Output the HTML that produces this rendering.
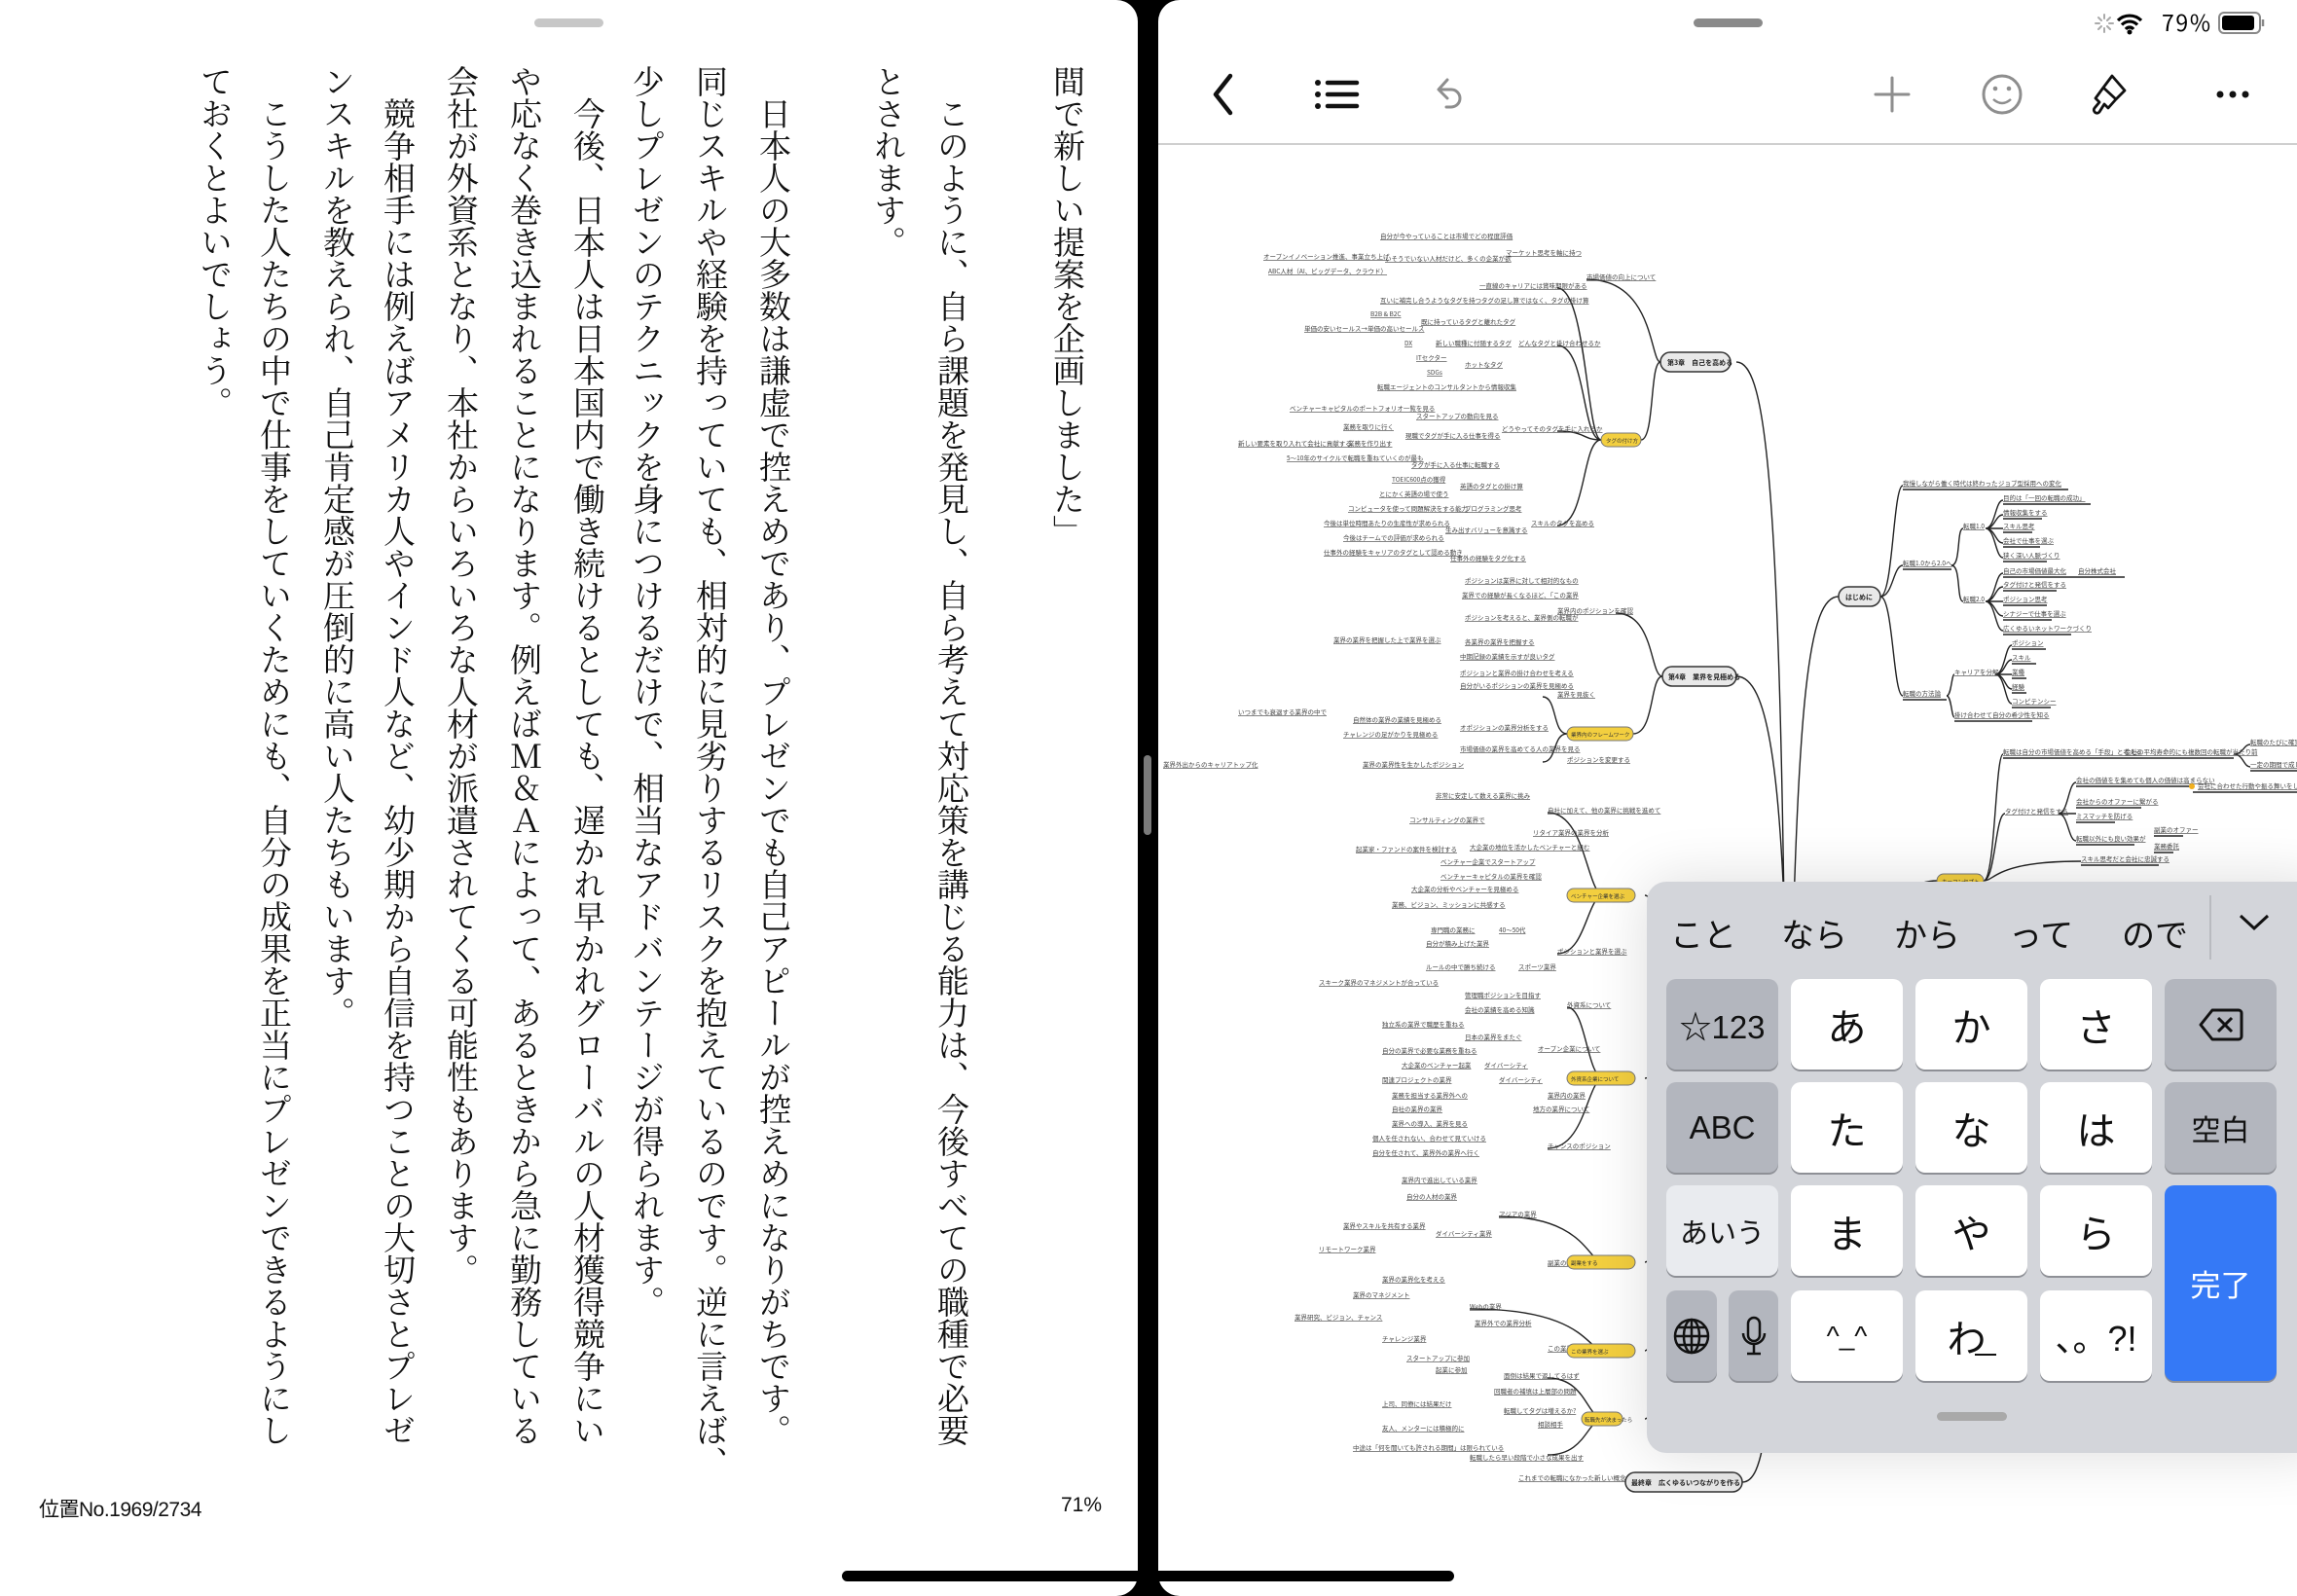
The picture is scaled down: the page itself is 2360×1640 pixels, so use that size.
<!DOCTYPE html>
<html lang="ja"><head><meta charset="utf-8">
<style>
*{margin:0;padding:0;box-sizing:border-box}
html,body{width:2360px;height:1640px;overflow:hidden;background:#000}
body{position:relative;font-family:"Liberation Sans","Noto Sans CJK JP",sans-serif}
.pane{position:absolute;top:0;height:1640px;background:#fff;overflow:hidden}
#lp{left:0;width:1169px;border-radius:0 22px 22px 0}
#rp{left:1190px;width:1170px;border-radius:22px 0 0 22px}
.col{position:absolute;top:67px;writing-mode:vertical-rl;font-family:"Liberation Serif","Noto Serif CJK SC","Noto Serif CJK JP",serif;font-size:33px;line-height:33px;color:#111;white-space:nowrap}
.ab{position:absolute}
.key{position:absolute;width:115px;height:93px;border-radius:10px;background:#fff;box-shadow:0 2px 0 #8e9096;display:flex;align-items:center;justify-content:center;font-family:"Liberation Sans","Noto Sans CJK JP",sans-serif;color:#111;font-size:40px}
.g{background:#b3b6be}
.sg{position:absolute;top:934px;font-size:34px;color:#111;font-family:"Noto Sans CJK JP",sans-serif}
svg text{font-family:"Noto Sans CJK JP",sans-serif}
.l{font-size:6.5px;fill:#444;text-decoration:underline;text-decoration-color:#333}
.n{font-size:7px;font-weight:bold;fill:#222}
</style></head><body>

<div class="pane" id="lp">
  <div class="ab" style="left:549px;top:19px;width:71px;height:9px;border-radius:5px;background:#c7c7c7"></div>
  <div class="col" style="left:1078px">間で新しい提案を企画しました」</div>
  <div class="col" style="left:959px">　このように、自ら課題を発見し、自ら考えて対応策を講じる能力は、今後すべての職種で必要</div>
  <div class="col" style="left:894px">とされます。</div>
  <div class="col" style="left:776px">　日本人の大多数は謙虚で控えめであり、プレゼンでも自己アピールが控えめになりがちです。</div>
  <div class="col" style="left:711px">同じスキルや経験を持っていても、相対的に見劣りするリスクを抱えているのです。逆に言えば、</div>
  <div class="col" style="left:646px">少しプレゼンのテクニックを身につけるだけで、相当なアドバンテージが得られます。</div>
  <div class="col" style="left:585px">　今後、日本人は日本国内で働き続けるとしても、遅かれ早かれグローバルの人材獲得競争にい</div>
  <div class="col" style="left:520px">や応なく巻き込まれることになります。例えばＭ＆Ａによって、あるときから急に勤務している</div>
  <div class="col" style="left:455px">会社が外資系となり、本社からいろいろな人材が派遣されてくる可能性もあります。</div>
  <div class="col" style="left:390px">　競争相手には例えばアメリカ人やインド人など、幼少期から自信を持つことの大切さとプレゼ</div>
  <div class="col" style="left:328px">ンスキルを教えられ、自己肯定感が圧倒的に高い人たちもいます。</div>
  <div class="col" style="left:263px">　こうした人たちの中で仕事をしていくためにも、自分の成果を正当にプレゼンできるようにし</div>
  <div class="col" style="left:202px">ておくとよいでしょう。</div>
  <div class="ab" style="left:40px;top:1535px;font-size:21px;color:#111;letter-spacing:-0.5px">位置No.1969/2734</div>
  <div class="ab" style="left:1090px;top:1535px;font-size:21px;color:#111">71%</div>
</div>

<div class="pane" id="rp">
  <div class="ab" style="left:550px;top:19px;width:71px;height:9px;border-radius:5px;background:#8a8a8a"></div>
  <div class="ab" style="left:0;top:147px;width:1170px;height:2px;background:#cfcfcf"></div>
</div>

<!-- status + toolbar -->
<svg class="ab" style="left:0;top:0" width="2360" height="150">
  <g stroke="#aaa" stroke-width="2" stroke-linecap="round">
    <path d="M2162 15v4M2162 29v4M2153 24h4M2167 24h4M2156 18l3 3M2165 27l3 3M2156 30l3-3M2165 21l3-3"/>
  </g>
  <path d="M2176 21a17 17 0 0 1 24 0M2180 25.5a11 11 0 0 1 16 0M2184 30a5 5 0 0 1 8 0" fill="none" stroke="#000" stroke-width="3.2"/>
  <circle cx="2188" cy="33" r="2.5"/>
  <text x="2221" y="32" font-size="23" font-family="Liberation Sans" fill="#000" textLength="50">79%</text>
  <rect x="2280" y="13" width="42" height="21" rx="5" fill="none" stroke="#888" stroke-width="2"/>
  <rect x="2283" y="16" width="33" height="15" rx="3" fill="#000"/>
  <path d="M2325 20v7" stroke="#888" stroke-width="2.5"/>
  <path d="M1264 78L1249 97L1264 116" fill="none" stroke="#111" stroke-width="4.5" stroke-linecap="round" stroke-linejoin="round"/>
  <g fill="#111"><circle cx="1354" cy="85" r="3"/><circle cx="1354" cy="97" r="3"/><circle cx="1354" cy="109" r="3"/></g>
  <path d="M1364 85h30M1364 97h30M1364 109h30" stroke="#111" stroke-width="4.5" stroke-linecap="round"/>
  <path d="M1487 82l-9 10 9 9M1479 92h12a9 9 0 0 1 0 18h-5" fill="none" stroke="#8e8e8e" stroke-width="3" stroke-linecap="round" stroke-linejoin="round"/>
  <path d="M1944 80v34M1927 97h34" stroke="#8e8e8e" stroke-width="3" stroke-linecap="round"/>
  <circle cx="2057" cy="97" r="19" fill="none" stroke="#8e8e8e" stroke-width="3"/>
  <circle cx="2050" cy="91" r="2.3" fill="#8e8e8e"/><circle cx="2064" cy="91" r="2.3" fill="#8e8e8e"/>
  <path d="M2048 102q9 8 18 0" fill="none" stroke="#8e8e8e" stroke-width="2.5"/>
  <path d="M2170 78l13 15-9 9-13-12zM2161 90l13 12-8 9-4-4-5 8a3 3 0 0 1-5-4l5-6-4-4z" fill="none" stroke="#111" stroke-width="2.8" stroke-linejoin="round"/>
  <g fill="#111"><circle cx="2281" cy="97" r="3.5"/><circle cx="2294" cy="97" r="3.5"/><circle cx="2307" cy="97" r="3.5"/></g>
</svg>

<!-- mindmap -->
<svg class="ab" style="left:0;top:0" width="2360" height="1640">
<defs><clipPath id="c"><rect x="1190" y="150" width="1170" height="1480"/></clipPath></defs>
<g clip-path="url(#c)">
<g fill="none" stroke="#222" stroke-width="1.4">
  <path d="M1835 1120C1830 500 1815 372 1784 372"/>
  <path d="M1837 1120C1835 780 1815 695 1784 695"/>
  <path d="M1839 1120C1845 700 1860 613 1889 613"/>
  <path d="M1841 1120C1850 950 1960 905 1990 905"/>
  <path d="M1826 1120C1826 1480 1810 1523 1790 1523"/>
  <path d="M1706 372C1695 372 1700 287 1630 287"/>
  <path d="M1706 372C1695 372 1700 452 1686 452"/>
  <path d="M1645 452C1630 452 1630 296 1600 296"/>
  <path d="M1645 452C1625 452 1630 355 1600 355"/>
  <path d="M1645 452C1625 452 1630 443 1600 443"/>
  <path d="M1645 452C1625 452 1630 540 1600 540"/>
  <path d="M1708 695C1695 695 1700 630 1660 630"/>
  <path d="M1708 695C1695 695 1700 754 1678 754"/>
  <path d="M1610 754C1595 754 1600 716 1585 716"/>
  <path d="M1610 754C1595 754 1600 783 1585 783"/>
  <path d="M1690 920C1705 920 1700 1000 1720 1100"/>
  <path d="M1690 1108C1705 1108 1700 1050 1720 1000"/>
  <path d="M1690 1297C1710 1297 1705 1100 1720 1000"/>
  <path d="M1690 1388C1710 1388 1705 1100 1722 1000"/>
  <path d="M1690 1458C1712 1458 1708 1150 1724 1000"/>
  <path d="M1648 920C1630 920 1630 835 1590 835"/>
  <path d="M1648 920C1630 920 1630 980 1600 980"/>
  <path d="M1648 1108C1630 1108 1630 1035 1610 1035"/>
  <path d="M1648 1108C1630 1108 1630 1180 1590 1180"/>
  <path d="M1648 1297C1630 1297 1630 1250 1540 1250"/>
  <path d="M1648 1388C1630 1388 1630 1345 1510 1345"/>
  <path d="M1648 1458C1630 1458 1630 1416 1590 1416"/>
  <path d="M1648 1458C1630 1458 1630 1495 1590 1495"/>
  <path d="M1932 613C1945 613 1945 499 1955 499"/>
  <path d="M1932 613C1945 613 1945 581 1955 581"/>
  <path d="M1932 613C1945 613 1945 715 1955 715"/>
  <path d="M2005 581C2015 581 2010 543 2017 543"/>
  <path d="M2005 581C2015 581 2010 618 2017 618"/>
  <path d="M2040 543C2050 543 2050 514 2058 514M2040 543C2050 543 2050 573 2058 573M2040 543h18M2040 543C2050 543 2050 529 2058 529M2040 543C2050 543 2050 558 2058 558"/>
  <path d="M2040 618C2050 618 2050 589 2058 589M2040 618C2050 618 2050 648 2058 648M2040 618h18M2040 618C2050 618 2050 603 2058 603M2040 618C2050 618 2050 633 2058 633"/>
  <path d="M2000 715C2005 715 2005 693 2008 693M2000 715C2005 715 2005 737 2008 737"/>
  <path d="M2050 693C2060 693 2060 663 2067 663M2050 693C2060 693 2060 723 2067 723M2050 693h17M2050 693C2060 693 2060 678 2067 678M2050 693C2060 693 2060 708 2067 708"/>
  <path d="M2038 905C2050 905 2050 775 2058 775M2038 905C2050 905 2050 836 2060 836M2038 905C2050 905 2050 885 2138 885"/>
  <path d="M2115 836C2125 836 2125 804 2133 804M2115 836h18M2115 836C2125 836 2125 864 2133 864"/>
  <path d="M2295 775C2305 775 2305 765 2312 765M2295 775C2305 775 2305 788 2312 788"/>
</g>
<g stroke="#222" stroke-width="1.4">
  <path d="M1955 503h95M2050 503h75M2058 518h90M2058 533h40M2058 547h30M2058 562h38M2058 577h45M1955 585h50M2058 593h75M2133 593h50M2058 607h55M2058 622h45M2058 637h50M2058 652h70M2067 667h35M2067 682h25M2067 697h15M2067 712h15M2067 727h40M1955 719h45M2008 741h80M2058 779h125M2183 779h112M2312 792h50M2133 808h120M2253 814h107M2133 830h67M2133 845h40M2133 868h60M2213 859h30M2213 876h20M2138 889h80"/>
</g>
<g>
<text class="l" x="1418" y="245">自分が今やっていることは市場でどの程度評価</text>
<text class="l" x="1547" y="262">マーケット思考を軸に持つ</text>
<text class="l" x="1298" y="266">オープンイノベーション推進、事業立ち上げ</text>
<text class="l" x="1423" y="268">いそうでいない人材だけど、多くの企業が欲</text>
<text class="l" x="1303" y="281">ABC人材（AI、ビッグデータ、クラウド）</text>
<text class="l" x="1630" y="287">市場価値の向上について</text>
<text class="l" x="1520" y="296">一直線のキャリアには賞味期限がある</text>
<text class="l" x="1418" y="311">互いに補完し合うようなタグを持つ</text>
<text class="l" x="1522" y="311">タグの足し算ではなく、タグの掛け算</text>
<text class="l" x="1408" y="325">B2B &amp; B2C</text>
<text class="l" x="1460" y="333">既に持っているタグと離れたタグ</text>
<text class="l" x="1340" y="340">単価の安いセールス→単価の高いセールス</text>
<text class="l" x="1443" y="355">DX</text><text class="l" x="1475" y="355">新しい職種に付随するタグ</text>
<text class="l" x="1560" y="355">どんなタグと掛け合わせるか</text>
<text class="l" x="1455" y="370">ITセクター</text><text class="l" x="1505" y="377">ホットなタグ</text><text class="l" x="1466" y="385">SDGs</text>
<text class="l" x="1415" y="400">転職エージェントのコンサルタントから情報収集</text>
<text class="l" x="1325" y="422">ベンチャーキャピタルのポートフォリオ一覧を見る</text>
<text class="l" x="1455" y="430">スタートアップの動向を見る</text>
<text class="l" x="1380" y="441">業務を取りに行く</text><text class="l" x="1543" y="443">どうやってそのタグを手に入れるか</text>
<text class="l" x="1444" y="450">現職でタグが手に入る仕事を得る</text>
<text class="l" x="1272" y="458">新しい要素を取り入れて会社に貢献する</text><text class="l" x="1385" y="458">業務を作り出す</text>
<text class="l" x="1322" y="473">5〜10年のサイクルで転職を重ねていくのが最も</text>
<text class="l" x="1450" y="480">タグが手に入る仕事に転職する</text>
<text class="l" x="1430" y="495">TOEIC600点の獲得</text><text class="l" x="1500" y="502">英語のタグとの掛け算</text>
<text class="l" x="1417" y="510">とにかく英語の場で使う</text>
<text class="l" x="1385" y="525">コンピュータを使って問題解決をする能力</text><text class="l" x="1505" y="525">プログラミング思考</text>
<text class="l" x="1360" y="540">今後は単位時間あたりの生産性が求められる</text><text class="l" x="1573" y="540">スキルのタグを高める</text>
<text class="l" x="1485" y="547">生み出すバリューを意識する</text>
<text class="l" x="1380" y="555">今後はチームでの評価が求められる</text>
<text class="l" x="1360" y="570">仕事外の経験をキャリアのタグとして認める動き</text><text class="l" x="1490" y="576">仕事外の経験をタグ化する</text>
<text class="l" x="1505" y="599">ポジションは業界に対して相対的なもの</text>
<text class="l" x="1502" y="614">業界での経験が長くなるほど、「この業界</text>
<text class="l" x="1600" y="630">業界内のポジションを確認</text>
<text class="l" x="1505" y="637">ポジションを考えると、業界側の転職が</text>
<text class="l" x="1370" y="660">業界の業界を把握した上で業界を選ぶ</text><text class="l" x="1505" y="662">各業界の業界を把握する</text>
<text class="l" x="1500" y="677">中期記録の業績を示すが良いタグ</text>
<text class="l" x="1500" y="694">ポジションと業界の掛け合わせを考える</text>
<text class="l" x="1500" y="707">自分がいるポジションの業界を見極める</text><text class="l" x="1600" y="716">業界を見抜く</text>
<text class="l" x="1272" y="734">いつまでも衰退する業界の中で</text><text class="l" x="1390" y="742">自然体の業界の業績を見極める</text>
<text class="l" x="1500" y="750">オポジションの業界分析をする</text>
<text class="l" x="1380" y="757">チャレンジの足がかりを見極める</text>
<text class="l" x="1500" y="772">市場価値の業界を高めてる人の業界を見る</text><text class="l" x="1610" y="783">ポジションを変更する</text>
<text class="l" x="1195" y="788">業界外出からのキャリアトップ化</text><text class="l" x="1400" y="788">業界の業界性を生かしたポジション</text>
<text class="l" x="1475" y="820">非常に安定して数える業界に挑み</text><text class="l" x="1590" y="835">自社に加えて、他の業界に挑戦を進めて</text>
<text class="l" x="1448" y="845">コンサルティングの業界で</text><text class="l" x="1575" y="858">リタイア業界の業界を分析</text>
<text class="l" x="1393" y="875">起業家・ファンドの案件を検討する</text><text class="l" x="1510" y="873">大企業の地位を活かしたベンチャーと組む</text>
<text class="l" x="1480" y="888">ベンチャー企業でスタートアップ</text>
<text class="l" x="1480" y="903">ベンチャーキャピタルの業界を確認</text>
<text class="l" x="1450" y="916">大企業の分析やベンチャーを見極める</text>
<text class="l" x="1430" y="932">業務、ビジョン、ミッションに共感する</text>
<text class="l" x="1470" y="958">専門職の業務に</text><text class="l" x="1540" y="958">40〜50代</text>
<text class="l" x="1465" y="972">自分が積み上げた業界</text><text class="l" x="1600" y="980">ポジションと業界を選ぶ</text>
<text class="l" x="1465" y="996">ルールの中で勝ち続ける</text><text class="l" x="1560" y="996">スポーツ業界</text>
<text class="l" x="1355" y="1012">スキーク業界のマネジメントが合っている</text>
<text class="l" x="1505" y="1025">管理職ポジションを目指す</text>
<text class="l" x="1505" y="1040">会社の業績を高める知識</text><text class="l" x="1610" y="1035">外資系について</text>
<text class="l" x="1420" y="1055">独立系の業界で職歴を重ねる</text><text class="l" x="1505" y="1068">日本の業界をまたぐ</text>
<text class="l" x="1420" y="1082">自分の業界で必要な業務を重ねる</text><text class="l" x="1580" y="1080">オープン企業について</text>
<text class="l" x="1440" y="1097">大企業のベンチャー起業</text><text class="l" x="1525" y="1097">ダイバーシティ</text>
<text class="l" x="1420" y="1112">関連プロジェクトの業界</text><text class="l" x="1540" y="1112">ダイバーシティ</text>
<text class="l" x="1430" y="1128">業務を担当する業界外への</text><text class="l" x="1590" y="1128">業界内の業界</text>
<text class="l" x="1430" y="1142">自社の業界の業界</text><text class="l" x="1575" y="1142">地方の業界について</text>
<text class="l" x="1430" y="1157">業界への導入、業界を見る</text>
<text class="l" x="1410" y="1172">個人を任されない、合わせて見ていける</text><text class="l" x="1590" y="1180">チャンスのポジション</text>
<text class="l" x="1410" y="1187">自分を任されて、業界外の業界へ行く</text>
<text class="l" x="1440" y="1215">業界内で進出している業界</text>
<text class="l" x="1445" y="1232">自分の人材の業界</text><text class="l" x="1540" y="1250">アジアの業界</text>
<text class="l" x="1380" y="1262">業界やスキルを共有する業界</text><text class="l" x="1475" y="1270">ダイバーシティ業界</text>
<text class="l" x="1355" y="1286">リモートワーク業界</text><text class="l" x="1590" y="1300">副業の業界</text>
<text class="l" x="1420" y="1317">業界の業界化を考える</text>
<text class="l" x="1390" y="1333">業界のマネジメント</text><text class="l" x="1510" y="1345">Webの業界</text>
<text class="l" x="1330" y="1356">業界研究、ビジョン、チャンス</text><text class="l" x="1515" y="1362">業界外での業界分析</text>
<text class="l" x="1420" y="1378">チャレンジ業界</text><text class="l" x="1590" y="1388">この業界</text>
<text class="l" x="1445" y="1398">スタートアップに参加</text><text class="l" x="1475" y="1410">起業に参加</text>
<text class="l" x="1545" y="1416">面倒は結果で返してるはず</text>
<text class="l" x="1535" y="1432">回職者の補填は上層部の問題</text>
<text class="l" x="1420" y="1445">上司、同僚には結果だけ</text><text class="l" x="1545" y="1452">転職してタグは増えるか?</text>
<text class="l" x="1420" y="1470">友人、メンターには積極的に</text><text class="l" x="1580" y="1466">相談相手</text>
<text class="l" x="1390" y="1490">中途は「何を聞いても許される期間」は限られている</text><text class="l" x="1510" y="1500">転職したら早い段階で小さな成果を出す</text>
<text class="l" x="1560" y="1521">これまでの転職になかった新しい概念</text>
<text class="l" x="1955" y="499">我慢しながら働く時代は終わった</text><text class="l" x="2053" y="499">ジョブ型採用への変化</text>
<text class="l" x="2017" y="543">転職1.0</text>
<text class="l" x="2058" y="514">目的は「一回の転職の成功」</text><text class="l" x="2058" y="529">情報収集をする</text>
<text class="l" x="2058" y="543">スキル思考</text><text class="l" x="2058" y="558">会社で仕事を選ぶ</text><text class="l" x="2058" y="573">狭く深い人脈づくり</text>
<text class="l" x="1955" y="581">転職1.0から2.0へ</text>
<text class="l" x="2058" y="589">自己の市場価値最大化</text><text class="l" x="2135" y="589">自分株式会社</text>
<text class="l" x="2017" y="618">転職2.0</text>
<text class="l" x="2058" y="603">タグ付けと発信をする</text><text class="l" x="2058" y="618">ポジション思考</text>
<text class="l" x="2058" y="633">シナジーで仕事を選ぶ</text><text class="l" x="2058" y="648">広くゆるいネットワークづくり</text>
<text class="l" x="2008" y="693">キャリアを分解</text>
<text class="l" x="2067" y="663">ポジション</text><text class="l" x="2067" y="678">スキル</text><text class="l" x="2067" y="693">業種</text><text class="l" x="2067" y="708">経験</text><text class="l" x="2067" y="723">コンピテンシー</text>
<text class="l" x="1955" y="715">転職の方法論</text><text class="l" x="2008" y="737">掛け合わせて自分の希少性を知る</text>
<text class="l" x="2058" y="775">転職は自分の市場価値を高める「手段」と考える</text>
<text class="l" x="2183" y="775">会社の平均寿命的にも複数回の転職が当たり前</text>
<text class="l" x="2312" y="765">転職のたびに確実に</text><text class="l" x="2312" y="788">一定の期間で成し遂げ</text>
<text class="l" x="2133" y="804">会社の価値をを集めても個人の価値は高まらない</text>
<text class="l" x="2258" y="810">会社に合わせた行動や振る舞いをしない</text>
<text class="l" x="2060" y="836">タグ付けと発信をする</text>
<text class="l" x="2133" y="826">会社からのオファーに繋がる</text><text class="l" x="2133" y="841">ミスマッチを防げる</text>
<text class="l" x="2133" y="864">転職以外にも良い効果が</text><text class="l" x="2213" y="855">副業のオファー</text><text class="l" x="2213" y="872">業務委託</text>
<text class="l" x="2138" y="885">スキル思考だと会社に忠誠する</text>
</g>
<circle cx="2252" cy="808" r="3" fill="#f2b01e"/>
<g stroke="#333" stroke-width="1.5">
  <rect x="1706" y="362" width="72" height="20" rx="10" fill="#e9e9e9"/>
  <rect x="1889" y="603" width="43" height="20" rx="10" fill="#e9e9e9"/>
  <rect x="1708" y="685" width="76" height="20" rx="10" fill="#e9e9e9"/>
  <rect x="1670" y="1513" width="120" height="20" rx="10" fill="#e9e9e9"/>
  <g fill="#f3cf3f" stroke="#777" stroke-width="1">
    <rect x="1645" y="445" width="41" height="14" rx="7"/>
    <rect x="1610" y="747" width="68" height="14" rx="7"/>
    <rect x="1610" y="913" width="70" height="14" rx="7"/>
    <rect x="1610" y="1101" width="70" height="14" rx="7"/>
    <rect x="1610" y="1290" width="70" height="14" rx="7"/>
    <rect x="1610" y="1381" width="70" height="14" rx="7"/>
    <rect x="1625" y="1451" width="42" height="14" rx="7"/>
    <rect x="1990" y="898" width="48" height="14" rx="7"/>
  </g>
</g>
<text class="n" x="1713" y="375">第3章　自己を高める</text>
<text class="n" x="1896" y="616">はじめに</text>
<text class="n" x="1714" y="698">第4章　業界を見極める</text>
<text class="n" x="1676" y="1526">最終章　広くゆるいつながりを作る</text>
<g font-size="5.5" fill="#333"><text x="1650" y="455">タグの付け方</text><text x="1614" y="757">業界内のフレームワーク</text>
<text x="1614" y="923">ベンチャー企業を選ぶ</text><text x="1614" y="1111">外資系企業について</text><text x="1614" y="1300">副業をする</text>
<text x="1614" y="1391">この業界を選ぶ</text><text x="1628" y="1461">転職先が決まったら</text><text x="1995" y="908">キーコンセプト</text></g>
</g>
</svg>

<!-- keyboard -->
<div class="ab" style="left:1692px;top:906px;width:700px;height:587px;border-radius:20px;background:#d3d5da;box-shadow:0 0 60px rgba(0,0,0,0.14)"></div>
<div class="sg" style="left:1716px">こと</div>
<div class="sg" style="left:1830px">なら</div>
<div class="sg" style="left:1946px">から</div>
<div class="sg" style="left:2064px">って</div>
<div class="sg" style="left:2180px">ので</div>
<div class="ab" style="left:2270px;top:920px;width:2px;height:66px;background:#b9bbc0"></div>
<svg class="ab" style="left:2300px;top:938px" width="32" height="20"><path d="M2 3l14 13 14-13" fill="none" stroke="#111" stroke-width="3"/></svg>

<div class="key g" style="left:1712px;top:1006px;font-size:33px">☆123</div>
<div class="key" style="left:1840px;top:1006px">あ</div>
<div class="key" style="left:1968px;top:1006px">か</div>
<div class="key" style="left:2096px;top:1006px">さ</div>
<div class="key g" style="left:2224px;top:1006px"><svg width="46" height="36"><path d="M14 3h27a3 3 0 0 1 3 3v24a3 3 0 0 1-3 3H14L2 18z" fill="none" stroke="#111" stroke-width="3" stroke-linejoin="round"/><path d="M20 11l14 14M34 11L20 25" stroke="#111" stroke-width="3"/></svg></div>
<div class="key g" style="left:1712px;top:1112px;font-size:33px">ABC</div>
<div class="key" style="left:1840px;top:1112px">た</div>
<div class="key" style="left:1968px;top:1112px">な</div>
<div class="key" style="left:2096px;top:1112px">は</div>
<div class="key g" style="left:2224px;top:1112px;font-size:30px">空白</div>
<div class="key" style="left:1712px;top:1218px;background:#e9ebef;font-size:29px">あいう</div>
<div class="key" style="left:1840px;top:1218px">ま</div>
<div class="key" style="left:1968px;top:1218px">や</div>
<div class="key" style="left:2096px;top:1218px">ら</div>
<div class="key" style="left:2224px;top:1218px;height:201px;background:#3579f6;color:#fff;font-size:31px">完了</div>
<div class="key g" style="left:1712px;top:1326px;width:52px"><svg width="40" height="40"><g fill="none" stroke="#111" stroke-width="2.5"><circle cx="20" cy="20" r="17"/><ellipse cx="20" cy="20" rx="8" ry="17"/><path d="M20 3v34M3 20h34M6 11h28M6 29h28"/></g></svg></div>
<div class="key g" style="left:1776px;top:1326px;width:51px"><svg width="26" height="42"><rect x="7" y="2" width="12" height="24" rx="6" fill="none" stroke="#111" stroke-width="2.5"/><path d="M2 18a11 11 0 0 0 22 0M13 30v8M6 39h14" fill="none" stroke="#111" stroke-width="2.5"/></svg></div>
<div class="key" style="left:1840px;top:1326px;font-size:28px">^_^</div>
<div class="key" style="left:1968px;top:1326px">わ<span style="display:inline-block;width:22px;border-bottom:2px solid #111;margin-left:-12px;height:40px"></span></div>
<div class="key" style="left:2096px;top:1326px;font-size:36px">、。?!</div>
<div class="ab" style="left:1990px;top:1451px;width:72px;height:9px;border-radius:5px;background:#a9a9a9"></div>

<!-- split handle + home bar -->
<div class="ab" style="left:1175px;top:776px;width:8px;height:82px;border-radius:4px;background:#7a7a7a"></div>
<div class="ab" style="left:865px;top:1614px;width:629px;height:11px;border-radius:6px;background:#000"></div>
</body></html>
